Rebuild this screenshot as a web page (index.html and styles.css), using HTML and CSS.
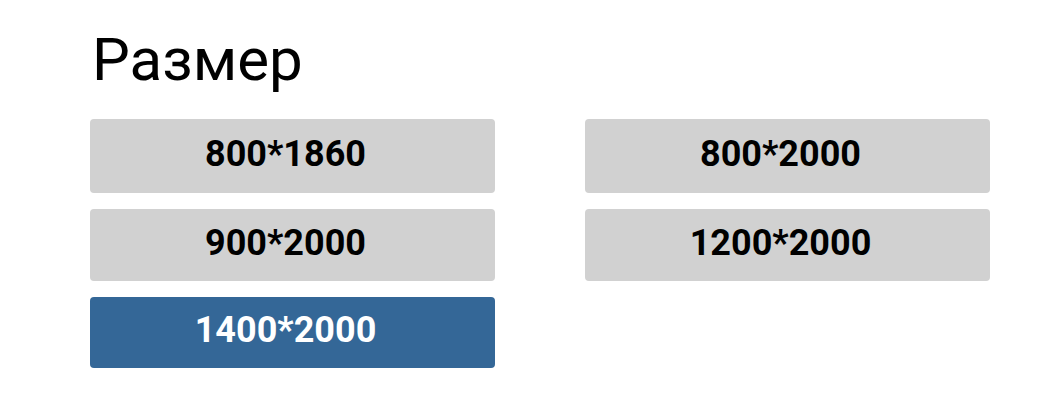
FILE: index.html
```html
<!DOCTYPE html>
<html lang="ru">
<head>
    <meta charset="UTF-8">
    <meta name="viewport" content="width=device-width, initial-scale=1.0">
    <title>Размер</title>
    <link rel="stylesheet" href="styles.css">
</head>
<body>
    <div class="container">
        <h1>Размер</h1>
        <div class="size-list">
            <button class="size-item">800*1860</button>
            <button class="size-item">800*2000</button>
            <button class="size-item">900*2000</button>
            <button class="size-item">1200*2000</button>
            <button class="size-item active">1400*2000</button>
        </div>
    </div>
</body>
</html>
```

FILE: styles.css
```css
body {
    font-family: Roboto, "Liberation Sans", sans-serif;
    margin: 0;
    padding: 0;
    background-color: #fff;
}
.container {
    width: 900px;
    padding: 30px 0 0 90px;
}
h1 {
    font-size: 60px;
    font-weight: 400;
    line-height: 60px;
    margin: 0 0 29px;
    padding-left: 2px;
    color: #000;
}
.size-list {
    display: grid;
    grid-template-columns: 405px 405px;
    grid-template-rows: 74px 72px 71px;
    gap: 16px 90px;
}
.size-item {
    display: flex;
    align-items: center;
    justify-content: center;
    padding: 0 14px 5px 0;
    font-family: Roboto, "Liberation Sans", sans-serif;
    font-size: 36px;
    font-weight: 700;
    color: #000;
    background-color: #d1d1d1;
    border: none;
    border-radius: 4px;
    cursor: pointer;
}
.size-item.active {
    background-color: #346797;
    color: #fff;
}
```
